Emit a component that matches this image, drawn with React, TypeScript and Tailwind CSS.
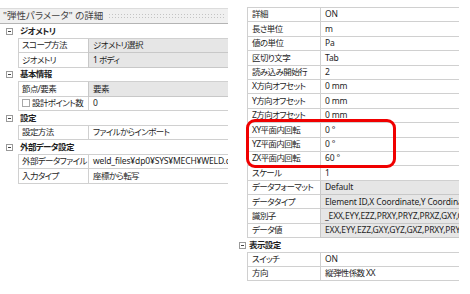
import React from 'react';

type Row =
  | { kind: 'cat'; label: string }
  | { kind: 'prop'; name: string; value: string; gray?: boolean; check?: boolean };

const leftRows: Row[] = [
  { kind: 'cat', label: 'ジオメトリ' },
  { kind: 'prop', name: 'スコープ方法', value: 'ジオメトリ選択', gray: true },
  { kind: 'prop', name: 'ジオメトリ', value: '1 ボディ', gray: true },
  { kind: 'cat', label: '基本情報' },
  { kind: 'prop', name: '節点/要素', value: '要素', gray: true },
  { kind: 'prop', name: '設計ポイント数', value: '0', check: true },
  { kind: 'cat', label: '設定' },
  { kind: 'prop', name: '設定方法', value: 'ファイルからインポート' },
  { kind: 'cat', label: '外部データ設定' },
  { kind: 'prop', name: '外部データファイル', value: 'weld_files¥dp0¥SYS¥MECH¥WELD.csv' },
  { kind: 'prop', name: '入力タイプ', value: '座標から転写' },
];

const rightRows: Row[] = [
  { kind: 'prop', name: '詳細', value: 'ON' },
  { kind: 'prop', name: '長さ単位', value: 'm' },
  { kind: 'prop', name: '値の単位', value: 'Pa' },
  { kind: 'prop', name: '区切り文字', value: 'Tab' },
  { kind: 'prop', name: '読み込み開始行', value: '2' },
  { kind: 'prop', name: 'X方向オフセット', value: '0 mm' },
  { kind: 'prop', name: 'Y方向オフセット', value: '0 mm' },
  { kind: 'prop', name: 'Z方向オフセット', value: '0 mm' },
  { kind: 'prop', name: 'XY平面内回転', value: '0 °' },
  { kind: 'prop', name: 'YZ平面内回転', value: '0 °' },
  { kind: 'prop', name: 'ZX平面内回転', value: '60 °' },
  { kind: 'prop', name: 'スケール', value: '1' },
  { kind: 'prop', name: 'データフォーマット', value: 'Default', gray: true },
  { kind: 'prop', name: 'データタイプ', value: 'Element ID,X Coordinate,Y Coordinate,Z Coordinate', gray: true },
  { kind: 'prop', name: '識別子', value: '_EXX,EYY,EZZ,PRXY,PRYZ,PRXZ,GXY,GYZ,GXZ', gray: true },
  { kind: 'prop', name: 'データ値', value: 'EXX,EYY,EZZ,GXY,GYZ,GXZ,PRXY,PRYZ,PRXZ', gray: true },
  { kind: 'cat', label: '表示設定' },
  { kind: 'prop', name: 'スイッチ', value: 'ON' },
  { kind: 'prop', name: '方向', value: '縦弾性係数 XX' },
];

const isLatin = (s: string) => /^[\x20-\x7E¥°]*$/.test(s);

// small boxed minus used for collapsible groups
function Collapse() {
  return (
    <div className="flex h-[7px] w-[7px] items-center justify-center border border-[#9a9a9a] bg-white">
      <div className="h-px w-[3px] bg-[#444]" />
    </div>
  );
}

function Grid({ rows, side }: { rows: Row[]; side: 'left' | 'right' }) {
  const gutter = side === 'left' ? 'w-[18px]' : 'w-[9px]';
  const nameW = side === 'left' ? 'w-[70px] pl-[3px]' : 'w-[73px] pl-[4px]';
  const rowH = side === 'left' ? 'h-[14.5px]' : 'h-[14.4px]';

  return (
    <div className="flex flex-col">
      {rows.map((r, i) =>
        r.kind === 'cat' ? (
          <div key={i} className={`flex ${rowH}`}>
            <div className={`${gutter} flex shrink-0 items-center justify-center`}>
              <Collapse />
            </div>
            <div className="flex flex-1 items-center border-b border-[#d0d0d0] bg-white pl-[2px] font-bold">
              {r.label}
            </div>
          </div>
        ) : (
          <div key={i} className={`flex ${rowH}`}>
            <div className={`${gutter} shrink-0`} />
            <div className={`${nameW} flex shrink-0 items-center gap-[2px] overflow-hidden whitespace-nowrap border-b border-l border-[#d0d0d0] bg-white`}>
              {r.check && <div className="h-[8px] w-[8px] shrink-0 border border-[#a8a8a8] bg-white" />}
              {r.name}
            </div>
            <div
              className={
                r.gray
                  ? 'flex min-w-0 flex-1 items-center overflow-hidden whitespace-nowrap border-b border-l border-[#c8c8c8] bg-[#e6e6e6] pl-[4px]'
                  : 'flex min-w-0 flex-1 items-center overflow-hidden whitespace-nowrap border-b border-l border-[#d0d0d0] bg-white pl-[4px]'
              }
            >
              <span className={isLatin(r.value) ? 'tracking-[-0.15px]' : ''}>{r.value}</span>
            </div>
          </div>
        )
      )}
    </div>
  );
}

export default function App() {
  return (
    <div className="flex h-[294px] w-[470px] overflow-hidden bg-white font-['Noto_Sans','Noto_Sans_CJK_JP',sans-serif] text-[8.5px] leading-none tracking-[-0.6px] text-[#1e1e1e] [font-feature-settings:'palt']">
      {/* left: material parameter details */}
      <div className="flex w-[228px] shrink-0 flex-col pt-[8px]">
        <div className="flex h-[16px] items-center border-b border-t border-b-[#b4b4b4] border-t-[#dcdcdc] bg-[#f0f0f0] pl-[3px]">
          <span className="whitespace-nowrap text-[9.5px] tracking-normal text-[#444]">"弾性パラメータ" の詳細</span>
          <div className="ml-[5px] mr-[3px] h-[6px] flex-1 bg-[radial-gradient(#c4c4c4_0.8px,transparent_0.8px)] bg-[length:3px_3px]" />
        </div>
        <Grid rows={leftRows} side="left" />
      </div>

      <div className="w-[10px] shrink-0" />

      {/* right: external data settings */}
      <div className="relative flex w-[221px] shrink-0 flex-col pt-[7px]">
        <div className="ml-[9px] border-t border-[#d0d0d0]" />
        <Grid rows={rightRows} side="right" />
        <div className="absolute left-[8px] top-[119px] h-[49px] w-[150px] rounded-[9px] border-[3px] border-[#f00000]" />
      </div>
    </div>
  );
}
